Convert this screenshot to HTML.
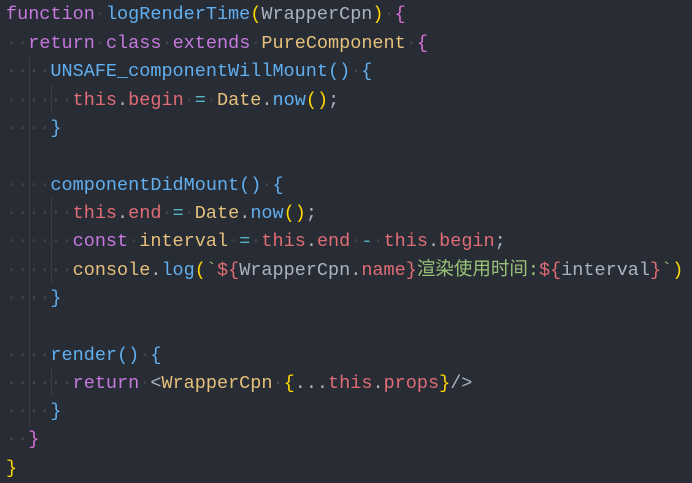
<!DOCTYPE html>
<html><head><style>
html,body{margin:0;padding:0;}
body{width:692px;height:482px;background:#282c35;overflow:hidden;position:relative;font-family:"Liberation Mono","Noto Sans CJK SC",monospace;font-size:18.5px;color:#abb2bf;}
.l{position:absolute;left:6px;white-space:pre;line-height:28px;height:28px;margin-top:1px;}
.k{color:#c678dd}.f{color:#61afef}.y{color:#ffd700}.c{color:#e5c07b}.t{color:#e06c75}.o{color:#56b6c2}.s{color:#98c379}.d{color:#3f4550}.p{color:#da70d6}
.g{position:absolute;width:1px;background:#3b4048;}
</style></head><body>
<div class="g" style="left:29px;top:57px;height:370px"></div>
<div class="g" style="left:51px;top:85px;height:28px"></div>
<div class="g" style="left:51px;top:198px;height:85px"></div>
<div class="g" style="left:51px;top:368px;height:28px"></div>
<div class="l" style="top:0px"><span class="k">function</span><span class="d">·</span><span class="f">logRenderTime</span><span class="y">(</span>WrapperCpn<span class="y">)</span><span class="d">·</span><span class="p">{</span></div>
<div class="l" style="top:29px"><span class="d">··</span><span class="k">return</span><span class="d">·</span><span class="k">class</span><span class="d">·</span><span class="k">extends</span><span class="d">·</span><span class="c">PureComponent</span><span class="d">·</span><span class="p">{</span></div>
<div class="l" style="top:57px"><span class="d">····</span><span class="f">UNSAFE_componentWillMount</span><span class="f">()</span><span class="d">·</span><span class="f">{</span></div>
<div class="l" style="top:86px"><span class="d">······</span><span class="t">this</span>.<span class="t">begin</span><span class="d">·</span><span class="o">=</span><span class="d">·</span><span class="c">Date</span>.<span class="f">now</span><span class="y">()</span>;</div>
<div class="l" style="top:114px"><span class="d">····</span><span class="f">}</span></div>
<div class="l" style="top:171px"><span class="d">····</span><span class="f">componentDidMount</span><span class="f">()</span><span class="d">·</span><span class="f">{</span></div>
<div class="l" style="top:199px"><span class="d">······</span><span class="t">this</span>.<span class="t">end</span><span class="d">·</span><span class="o">=</span><span class="d">·</span><span class="c">Date</span>.<span class="f">now</span><span class="y">()</span>;</div>
<div class="l" style="top:227px"><span class="d">······</span><span class="k">const</span><span class="d">·</span><span class="c">interval</span><span class="d">·</span><span class="o">=</span><span class="d">·</span><span class="t">this</span>.<span class="t">end</span><span class="d">·</span><span class="o">-</span><span class="d">·</span><span class="t">this</span>.<span class="t">begin</span>;</div>
<div class="l" style="top:256px"><span class="d">······</span><span class="c">console</span>.<span class="f">log</span><span class="y">(</span><span class="s">`</span><span class="t">${</span>WrapperCpn.<span class="t">name</span><span class="t">}</span><span class="s">渲染使用时间:</span><span class="t">${</span>interval<span class="t">}</span><span class="s">`</span><span class="y">)</span></div>
<div class="l" style="top:284px"><span class="d">····</span><span class="f">}</span></div>
<div class="l" style="top:341px"><span class="d">····</span><span class="f">render</span><span class="f">()</span><span class="d">·</span><span class="f">{</span></div>
<div class="l" style="top:369px"><span class="d">······</span><span class="k">return</span><span class="d">·</span>&lt;<span class="c">WrapperCpn</span><span class="d">·</span><span class="y">{</span>...<span class="t">this</span>.<span class="t">props</span><span class="y">}</span>/&gt;</div>
<div class="l" style="top:397px"><span class="d">····</span><span class="f">}</span></div>
<div class="l" style="top:425px"><span class="d">··</span><span class="p">}</span></div>
<div class="l" style="top:454px"><span class="y">}</span></div>
</body></html>
